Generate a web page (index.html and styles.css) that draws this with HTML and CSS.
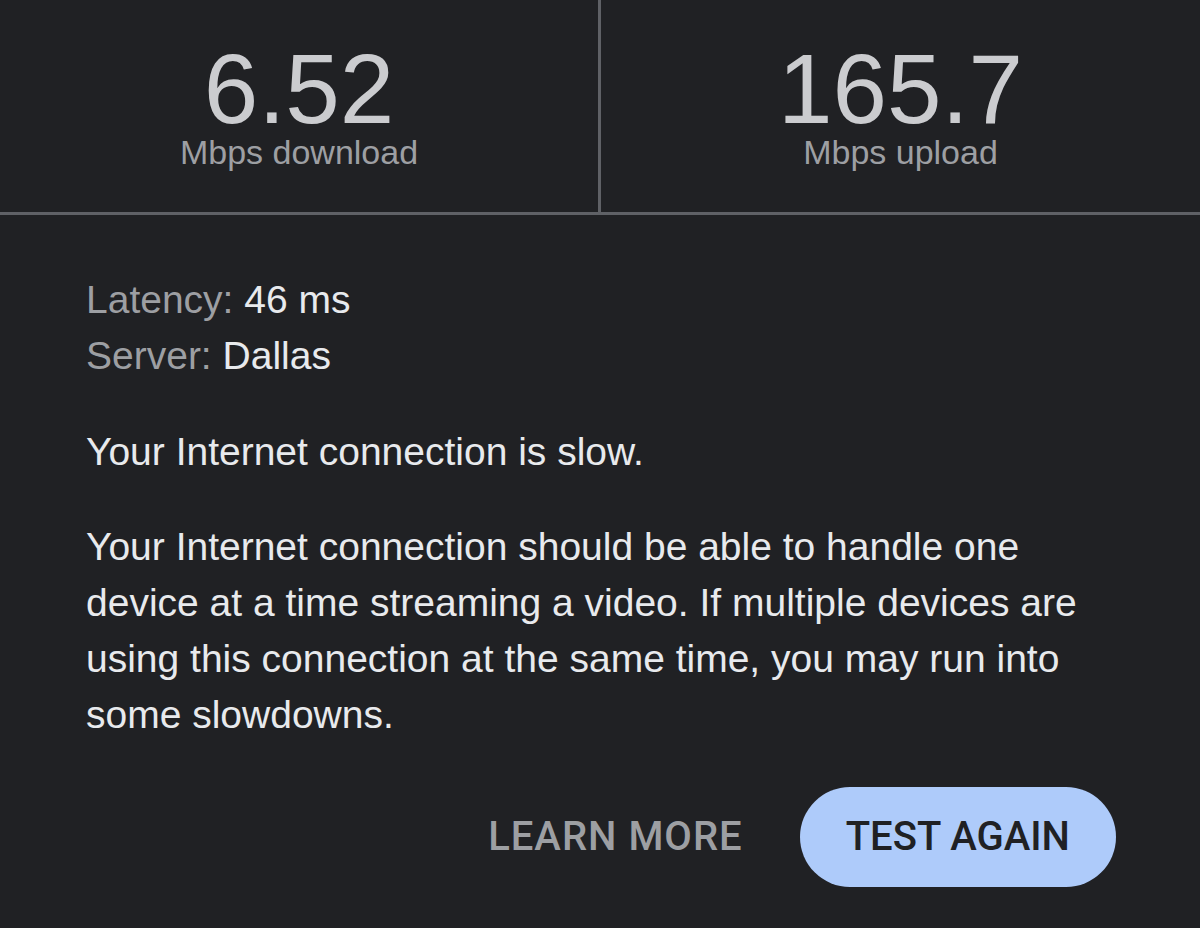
FILE: index.html
```html
<!DOCTYPE html>
<html lang="en">
<head>
<meta charset="utf-8">
<title>Speed test result</title>
<link rel="stylesheet" href="styles.css">
</head>
<body>
<main class="result">
  <section class="speeds">
    <div class="speed">
      <div class="speed-value">6.52</div>
      <div class="speed-label">Mbps download</div>
    </div>
    <div class="speed">
      <div class="speed-value">165.7</div>
      <div class="speed-label">Mbps upload</div>
    </div>
  </section>
  <section class="details">
    <div class="meta">
      <div class="meta-row"><span class="meta-key">Latency:</span> 46 ms</div>
      <div class="meta-row"><span class="meta-key">Server:</span> Dallas</div>
    </div>
    <p class="text">Your Internet connection is slow.</p>
    <p class="text">Your Internet connection should be able to handle one device at a time streaming a video. If multiple devices are using this connection at the same time, you may run into some slowdowns.</p>
    <div class="actions">
      <button class="btn btn-text" type="button">LEARN MORE</button>
      <button class="btn btn-filled" type="button">TEST AGAIN</button>
    </div>
  </section>
</main>
</body>
</html>
```

FILE: styles.css
```css
* { box-sizing: border-box; }

html, body {
  margin: 0;
  padding: 0;
  background: #202124;
}

body {
  width: 1200px;
  height: 928px;
  overflow: hidden;
  font-family: "Liberation Sans", Arial, sans-serif;
  color: #e8eaed;
}

.speeds {
  display: grid;
  grid-template-columns: 598px 602px;
  height: 215px;
  border-bottom: 3px solid #5f6166;
}

.speed {
  display: flex;
  flex-direction: column;
  align-items: center;
  padding-top: 46px;
}

.speed + .speed {
  border-left: 3px solid #5f6166;
}

.speed-value {
  font-size: 98px;
  line-height: 86px;
  color: #cbcccf;
}

.speed-label {
  font-size: 34px;
  line-height: 40px;
  color: #9d9fa3;
}

.details {
  padding: 57px 84px 0 86px;
}

.meta-row {
  font-size: 39px;
  line-height: 56px;
  color: #e8eaed;
}

.meta-key {
  color: #9d9fa3;
}

.text {
  margin: 40px 0 0;
  font-size: 39px;
  line-height: 56px;
  color: #e8eaed;
}

.text + .text {
  margin-top: 39px;
}

.actions {
  display: flex;
  justify-content: flex-end;
  align-items: center;
  gap: 12px;
  margin-top: 44px;
}

.btn {
  border: none;
  font-family: Roboto, "Liberation Sans", sans-serif;
  font-weight: 500;
  font-size: 40px;
  line-height: 100px;
  height: 100px;
  padding: 0 46px;
  border-radius: 50px;
  cursor: pointer;
}

.btn-text {
  background: transparent;
  color: #9d9fa3;
  letter-spacing: 1px;
  padding: 0 45px 0 46px;
}

.btn-filled {
  background: #aecbfa;
  color: #202124;
}
```
